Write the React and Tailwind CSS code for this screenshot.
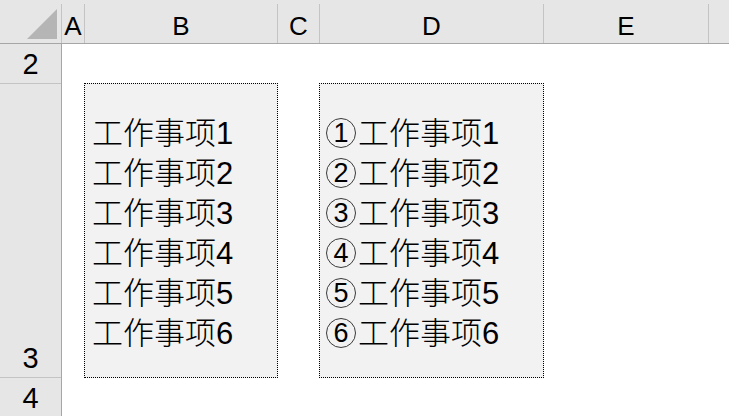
import React from 'react';

const cols = [
  { name: 'A', w: 'w-[23px]' },
  { name: 'B', w: 'w-[193px]' },
  { name: 'C', w: 'w-[42px]' },
  { name: 'D', w: 'w-[224px]' },
  { name: 'E', w: 'w-[165px]' },
];

const items = [1, 2, 3, 4, 5, 6];

const Circled = ({ n }) => (
  <span className="inline-flex w-[32px] align-top h-[40px] items-center">
    <span className="w-[30px] h-[30px] mb-[3px] rounded-full border border-[#3a3a3a] flex items-center justify-center text-[27px] leading-none pt-[1px]">
      {n}
    </span>
  </span>
);

const App = () => {
  return (
    <div className="w-[729px] h-[416px] overflow-hidden bg-white font-['Liberation_Sans',sans-serif] text-black">
      {/* column header */}
      <div className="flex h-[44px] bg-[#e6e6e6] border-b border-[#a6a6a6]">
        <div className="w-[62px] h-full pt-[4px] shrink-0">
          <div className="relative h-full border-r border-[#c4c4c4]">
            <svg className="absolute left-[27px] top-[5px]" width="31" height="31" viewBox="0 0 31 31">
              <polygon points="0,30 30,30 30,0" fill="#b5b5b5" />
            </svg>
          </div>
        </div>
        {cols.map((c) => (
          <div key={c.name} className={`${c.w} h-full pt-[4px] shrink-0`}>
            <div className="h-full border-r border-[#c4c4c4] flex items-center justify-center pt-[5px] text-[26px] leading-none">
              {c.name}
            </div>
          </div>
        ))}
        <div className="flex-1" />
      </div>

      <div className="flex h-[372px]">
        {/* row header */}
        <div className="w-[62px] shrink-0 bg-[#e6e6e6] border-r border-[#a6a6a6] flex flex-col text-[29px] leading-none">
          <div className="h-[40px] border-b border-[#c4c4c4] flex items-center justify-center pt-[2px]">2</div>
          <div className="h-[294px] border-b border-[#c4c4c4] flex items-end justify-center pb-[4px]">3</div>
          <div className="flex-1 flex items-center justify-center pt-[2px]">4</div>
        </div>

        {/* sheet */}
        <div className="flex-1 pt-[39px] pl-[22px] flex items-start gap-[41px]">
          <div className="w-[194px] h-[295px] bg-[#f2f2f2] border border-dotted border-black pt-[30px] pl-[7px] font-['Liberation_Sans','Noto_Sans_CJK_SC',sans-serif] font-light text-[31px] leading-[40px]">
            {items.map((n) => (
              <div key={n} className="h-[40px] whitespace-nowrap">工作事项{n}</div>
            ))}
          </div>
          <div className="w-[225px] h-[295px] bg-[#f2f2f2] border border-dotted border-black pt-[30px] pl-[6px] font-['Liberation_Sans','Noto_Sans_CJK_SC',sans-serif] font-light text-[31px] leading-[40px]">
            {items.map((n) => (
              <div key={n} className="h-[40px] whitespace-nowrap">
                <Circled n={n} />
                工作事项{n}
              </div>
            ))}
          </div>
        </div>
      </div>
    </div>
  );
};

export default App;
